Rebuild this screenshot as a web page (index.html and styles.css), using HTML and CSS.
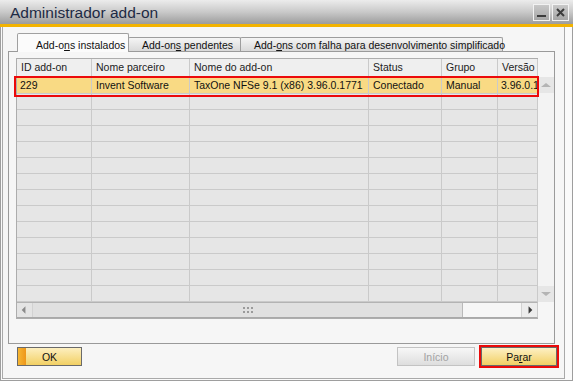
FILE: index.html
```html
<!DOCTYPE html>
<html lang="pt">
<head>
  <meta charset="UTF-8">
  <title>Administrador add-on</title>
  <link rel="stylesheet" href="styles.css">
</head>
<body>
  <div class="window">
    <div class="titlebar">
      <span class="title">Administrador add-on</span>
      <div class="winbtns">
        <span class="winbtn"><svg width="15" height="15" viewBox="0 0 15 15"><rect x="3" y="10" width="9" height="2" fill="#3c3c3c"/></svg></span>
        <span class="winbtn"><svg width="15" height="15" viewBox="0 0 15 15"><path d="M4 4 L11 11 M11 4 L4 11" stroke="#3c3c3c" stroke-width="2"/></svg></span>
      </div>
    </div>
    <div class="frame">
      <div class="tabs">
        <div class="tab active" style="width:112px">Add-o<u>n</u>s instalados</div>
        <div class="tab" style="width:113px">Add-on<u>s</u> pendentes</div>
        <div class="tab" style="width:263px">Add-<u>o</u>ns com falha para desenvolvimento simplificado</div>
      </div>
      <div class="panel">
        <div class="gridwrap">
          <div class="grid">
            <div class="row head">
              <div>ID add-on</div><div>Nome parceiro</div><div>Nome do add-on</div><div>Status</div><div>Grupo</div><div>Versão</div>
            </div>
            <div class="row first selected">
              <div>229</div><div>Invent Software</div><div>TaxOne NFSe 9.1 (x86) 3.96.0.1771</div><div>Conectado</div><div>Manual</div><div class="clip">3.96.0.17</div>
            </div>
            <div class="row"><div></div><div></div><div></div><div></div><div></div><div></div></div>
            <div class="row"><div></div><div></div><div></div><div></div><div></div><div></div></div>
            <div class="row"><div></div><div></div><div></div><div></div><div></div><div></div></div>
            <div class="row"><div></div><div></div><div></div><div></div><div></div><div></div></div>
            <div class="row"><div></div><div></div><div></div><div></div><div></div><div></div></div>
            <div class="row"><div></div><div></div><div></div><div></div><div></div><div></div></div>
            <div class="row"><div></div><div></div><div></div><div></div><div></div><div></div></div>
            <div class="row"><div></div><div></div><div></div><div></div><div></div><div></div></div>
            <div class="row"><div></div><div></div><div></div><div></div><div></div><div></div></div>
            <div class="row"><div></div><div></div><div></div><div></div><div></div><div></div></div>
            <div class="row"><div></div><div></div><div></div><div></div><div></div><div></div></div>
            <div class="row"><div></div><div></div><div></div><div></div><div></div><div></div></div>
            <div class="row"><div></div><div></div><div></div><div></div><div></div><div></div></div>
            <div class="hscroll">
              <span class="arrow"><svg width="16" height="14" viewBox="0 0 16 14"><path d="M5 7 L9 3 L9 11 Z" fill="#8a8a8a"/></svg></span>
              <span class="thumb"><svg width="12" height="6" viewBox="0 0 12 6"><g fill="#9a9a9a"><rect x="0" y="0" width="2" height="2"/><rect x="4" y="0" width="2" height="2"/><rect x="8" y="0" width="2" height="2"/><rect x="0" y="4" width="2" height="2"/><rect x="4" y="4" width="2" height="2"/><rect x="8" y="4" width="2" height="2"/></g></svg></span>
              <span class="track"></span>
              <span class="arrow right"><svg width="16" height="14" viewBox="0 0 16 14"><path d="M11 7 L7 3 L7 11 Z" fill="#3a3a3a"/></svg></span>
            </div>
            <div class="selbox"></div>
          </div>
          <div class="vscroll">
            <span class="varrow"><svg width="16" height="16" viewBox="0 0 16 16"><path d="M3 10 L8 6 L13 10 Z" fill="#b4b4b4"/></svg></span>
            <span class="varrow"><svg width="16" height="16" viewBox="0 0 16 16"><path d="M3 6 L8 10 L13 6 Z" fill="#b4b4b4"/></svg></span>
          </div>
        </div>
      </div>
      <div class="buttons">
        <button class="btn ok">OK</button>
        <span class="spacer"></span>
        <button class="btn disabled">Início</button>
        <button class="btn primary">Pa<u>r</u>ar</button>
      </div>
    </div>
  </div>
</body>
</html>
```
FILE: styles.css
```css
* { box-sizing: border-box; }
body { margin: 0; background: #fbfbfb; font-family: 'Liberation Sans', Arial, sans-serif; font-size: 10.5px; color: #111; }
u { text-decoration-thickness: 1px; text-underline-offset: 1px; }

.window { width: 573px; height: 381px; border: 1px solid #9e9e9e; border-top: none; background: #fafafa; }
.titlebar { height: 27px; display: flex; align-items: flex-start; background: linear-gradient(#ececec, #c9c9c9 50%, #9c9c9c); border-bottom: 3px solid #f3b300; margin: 0 -1px; }
.title { font-size: 15.5px; color: #1d2a44; padding: 3px 0 0 10px; line-height: 20px; }
.winbtns { margin-left: auto; display: flex; gap: 2px; padding: 4px 4px 0 0; }
.winbtn { width: 17px; height: 17px; border: 1px solid #f2f2f2; background: linear-gradient(#c8c8c8, #a6a6a6); display: flex; }

.frame { margin: 0 7px 1px 1px; height: 352px; border: 1px solid #a9a9a9; border-top: none; background: #f6f6f6; padding: 6px 0 0 5px; }

.tabs { display: flex; align-items: flex-end; margin-left: 9px; height: 18px; }
.tab { height: 14px; border: 1px solid #9d9d9d; border-bottom: none; border-radius: 2px 2px 0 0; background: linear-gradient(#f5f5f5, #d9d9d9); padding: 1px 0 0 13px; line-height: 12px; white-space: nowrap; margin-left: -1px; }
.tab.active { height: 19px; margin-bottom: -1px; margin-left: 0; background: #fbfbfb; padding: 5px 0 0 18px; position: relative; z-index: 2; border-color: #a0a0a0; }

.panel { width: 547px; height: 293px; border: 1px solid #9a9a9a; background: #f6f6f6; padding: 6px 0 0 7px; }
.gridwrap { display: flex; }
.grid { position: relative; width: 522px; border: 1px solid #adadad; border-right: none; }
.row { display: grid; grid-template-columns: 75px 98px 179px 73px 56px 40px; height: 16px; background: #e6e6e6; border-bottom: 1px solid #cacaca; }
.row > div { border-right: 1px solid #cacaca; padding: 0 3px 0 4px; line-height: 15px; white-space: nowrap; overflow: hidden; }
.row > div:first-child { padding-left: 3px; }
.row .clip { padding: 0 0 0 3px; }
.row.head { height: 18px; background: #efefef; color: #222; }
.row.head > div { line-height: 17px; }
.row.head > div:first-child { padding-left: 4px; }
.row.first { height: 17px; }
.row.first > div { line-height: 16px; }
.row.selected { background: #f9da84; }
.selbox { position: absolute; left: -3px; top: 17px; width: 525px; height: 21px; border: 2px solid #ec0a0a; }

.hscroll { display: flex; height: 16px; border-top: 1px solid #b3b3b3; border-bottom: 1px solid #a9a9a9; border-right: 1px solid #cacaca; background: #f6f6f6; }
.hscroll .arrow { width: 16px; display: flex; align-items: center; background: #e4e4e4; border-right: 1px solid #d2d2d2; }
.hscroll .arrow.right { border-right: none; border-left: 1px solid #d2d2d2; background: #ececec; }
.hscroll .thumb { width: 430px; background: #e0e0e0; border-right: 1px solid #b9b9b9; display: flex; align-items: center; justify-content: center; padding-left: 2px; }
.hscroll .track { flex: 1; }

.vscroll { width: 16px; margin-top: 19px; height: 225px; background: #f3f3f3; display: flex; flex-direction: column; justify-content: space-between; }
.varrow { height: 16px; background: #e6e6e6; display: flex; }

.buttons { display: flex; align-items: center; margin-top: 3px; padding: 0 7px 0 9px; }
.spacer { flex: 1; }
.btn { height: 19px; border: 1px solid #6a6a6a; font-family: inherit; font-size: 10.5px; padding: 0; color: #111; background: linear-gradient(#fdf0c4, #f2d064); cursor: pointer; }
.btn.ok { width: 65px; background: linear-gradient(90deg, #f6b632, #ee961a) left / 8px 100% no-repeat, linear-gradient(#fdefbf, #f2d064); padding-left: 0; }
.btn.disabled { width: 78px; border-color: #c3c3c3; background: linear-gradient(#f7f7f7, #dedede); color: #a2a2a2; margin-right: 6px; }
.btn.primary { width: 76px; outline: 2px solid #ea0a0a; }
```
